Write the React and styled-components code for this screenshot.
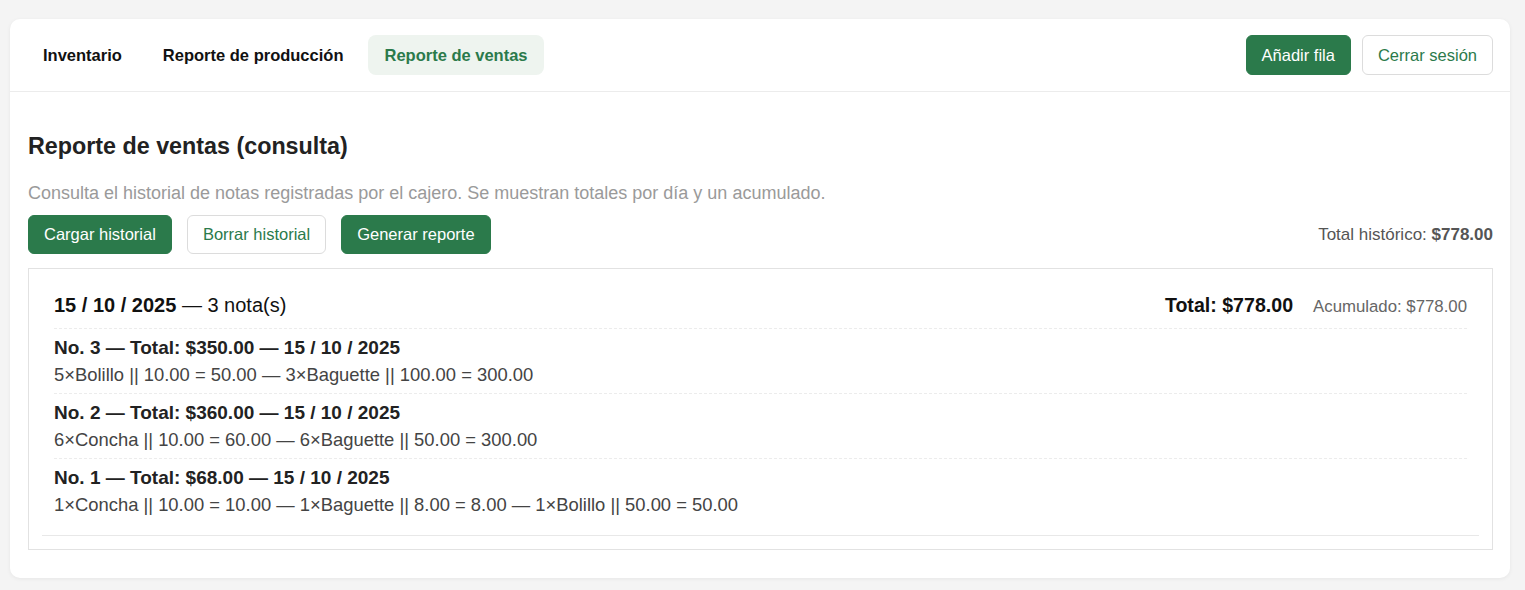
import React from 'react'
import styled, { createGlobalStyle } from 'styled-components'

const Global = createGlobalStyle`
  body {
    margin: 0;
    background: #f4f4f4;
    font-family: 'Liberation Sans', Arial, sans-serif;
  }
`

const Page = styled.div`
  padding: 19px 15px 13px 10px;
`

const Card = styled.div`
  background: #fff;
  border-radius: 10px;
  box-shadow: 0 1px 4px rgba(0, 0, 0, 0.06);
`

const Header = styled.div`
  display: flex;
  justify-content: space-between;
  align-items: center;
  padding: 16px 17px 16px 17px;
  border-bottom: 1px solid #ececec;
`

const Tabs = styled.div`
  display: flex;
  gap: 9px;
`

const Tab = styled.div`
  padding: 0 16px;
  height: 40px;
  display: flex;
  align-items: center;
  font-size: 16.5px;
  font-weight: 700;
  border-radius: 8px;
  color: ${p => (p.active ? '#2b7a4b' : '#111')};
  background: ${p => (p.active ? '#eef4ef' : 'transparent')};
`

const Actions = styled.div`
  display: flex;
  gap: 11px;
`

const Button = styled.button`
  font-family: inherit;
  font-size: 16.5px;
  height: ${p => p.h || 40}px;
  padding: 0 15px;
  border-radius: 6px;
  cursor: pointer;
  border: 1px solid ${p => (p.outline ? '#dcdcdc' : '#2b7a4b')};
  background: ${p => (p.outline ? '#fff' : '#2b7a4b')};
  color: ${p => (p.outline ? '#2b7a4b' : '#fff')};
`

const Body = styled.div`
  padding: 40px 17px 28px 18px;
`

const Title = styled.h2`
  margin: 0;
  font-size: 23.3px;
  font-weight: 700;
  color: #222;
  line-height: 28px;
`

const Subtitle = styled.p`
  margin: 22px 0 11px;
  font-size: 18px;
  color: #9a9a9a;
  line-height: 22px;
`

const Toolbar = styled.div`
  display: flex;
  align-items: center;
  gap: 15px;
`

const Grand = styled.div`
  margin-left: auto;
  font-size: 17px;
  color: #555;

  b {
    color: #555;
  }
`

const Box = styled.div`
  margin-top: 14px;
  border: 1px solid #e2e2e2;
  padding: 14px 13px 13px;
`

const Day = styled.div`
  padding: 11px 12px 12px;
  border-bottom: 1px solid #e8e8e8;
`

const DayHead = styled.div`
  display: flex;
  align-items: baseline;
  padding-bottom: 10px;
  border-bottom: 1px dashed #ececec;
  line-height: 22px;
`

const DayDate = styled.div`
  font-size: 20px;
  color: #111;

  b {
    font-weight: 700;
  }
`

const DayTotal = styled.div`
  margin-left: auto;
  font-size: 19.6px;
  font-weight: 700;
  color: #111;
`

const Accum = styled.div`
  margin-left: 20px;
  font-size: 16.8px;
  color: #666;
`

const Note = styled.div`
  padding: 8px 0 7px;
  border-bottom: ${p => (p.last ? 'none' : '1px dashed #ececec')};
`

const NoteTitle = styled.div`
  font-size: 19px;
  font-weight: 700;
  color: #222;
  line-height: 22px;
`

const NoteItems = styled.div`
  margin-top: 5px;
  font-size: 18.4px;
  color: #444;
  line-height: 22px;
`

const notes = [
  {
    title: 'No. 3 — Total: $350.00 — 15 / 10 / 2025',
    items: '5×Bolillo || 10.00 = 50.00 — 3×Baguette || 100.00 = 300.00',
  },
  {
    title: 'No. 2 — Total: $360.00 — 15 / 10 / 2025',
    items: '6×Concha || 10.00 = 60.00 — 6×Baguette || 50.00 = 300.00',
  },
  {
    title: 'No. 1 — Total: $68.00 — 15 / 10 / 2025',
    items: '1×Concha || 10.00 = 10.00 — 1×Baguette || 8.00 = 8.00 — 1×Bolillo || 50.00 = 50.00',
  },
]

export default function App() {
  return (
    <Page>
      <Global />
      <Card>
        <Header>
          <Tabs>
            <Tab>Inventario</Tab>
            <Tab>Reporte de producción</Tab>
            <Tab active>Reporte de ventas</Tab>
          </Tabs>
          <Actions>
            <Button>Añadir fila</Button>
            <Button outline>Cerrar sesión</Button>
          </Actions>
        </Header>
        <Body>
          <Title>Reporte de ventas (consulta)</Title>
          <Subtitle>
            Consulta el historial de notas registradas por el cajero. Se muestran totales por día y un acumulado.
          </Subtitle>
          <Toolbar>
            <Button h={39}>Cargar historial</Button>
            <Button h={39} outline>Borrar historial</Button>
            <Button h={39}>Generar reporte</Button>
            <Grand>
              Total histórico: <b>$778.00</b>
            </Grand>
          </Toolbar>
          <Box>
            <Day>
              <DayHead>
                <DayDate>
                  <b>15 / 10 / 2025</b> — 3 nota(s)
                </DayDate>
                <DayTotal>Total: $778.00</DayTotal>
                <Accum>Acumulado: $778.00</Accum>
              </DayHead>
              {notes.map((n, i) => (
                <Note key={i} last={i === notes.length - 1}>
                  <NoteTitle>{n.title}</NoteTitle>
                  <NoteItems>{n.items}</NoteItems>
                </Note>
              ))}
            </Day>
          </Box>
        </Body>
      </Card>
    </Page>
  )
}
